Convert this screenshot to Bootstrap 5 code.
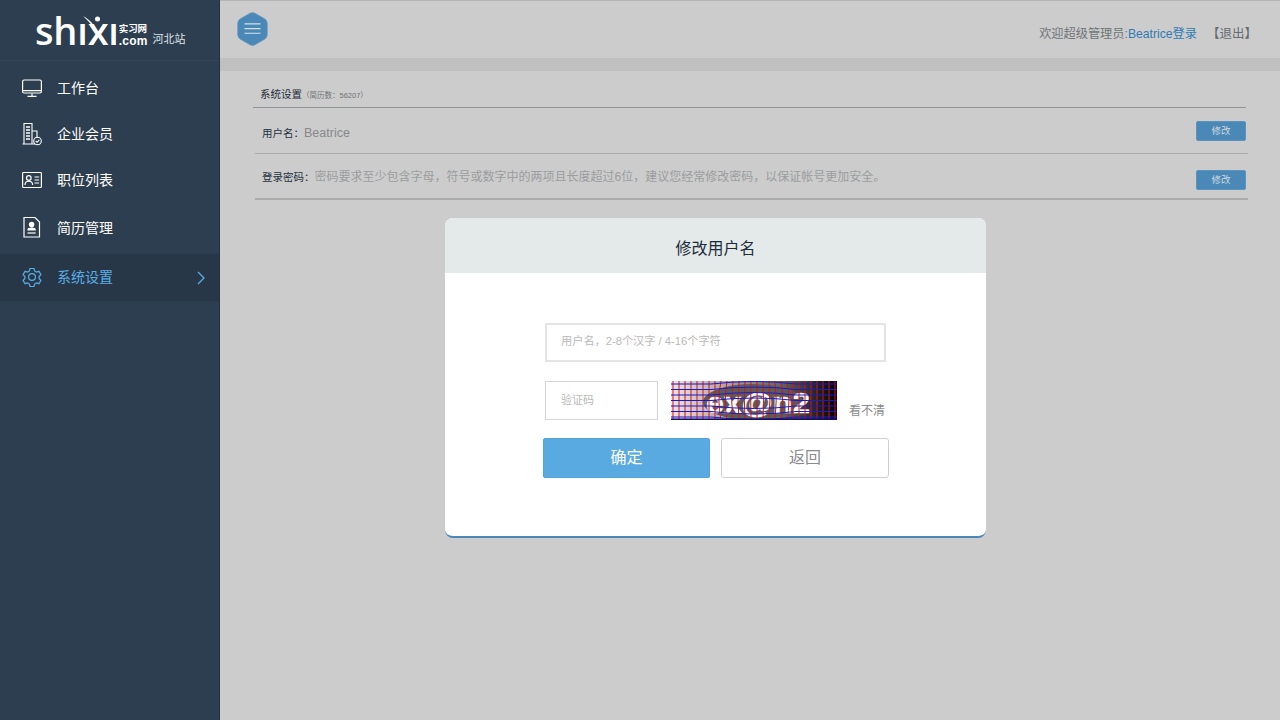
<!DOCTYPE html>
<html lang="zh-CN">
  <head>
    <meta charset="UTF-8" />
    <meta name="viewport" content="width=device-width, initial-scale=1" />
    <title>系统设置</title>
    <link href="https://cdn.jsdelivr.net/npm/bootstrap@5.3.0/dist/css/bootstrap.min.css" rel="stylesheet" />
    <style>
      html, body { height: 100%; }
      body {
        font-family: "Liberation Sans", "Noto Sans CJK SC", sans-serif;
        background: #cccccc;
        overflow: hidden;
      }
      .app-shell { height: 720px; }
      /* sidebar */
      .side-bar { width: 220px; background: #2d3e50; border-right: 1px solid #22303e; }
      .logo-box { position: relative; height: 61px; border-bottom: 1px solid #34475a; padding: 14px 0 0 35px; color: #fff; }
      .logo-main { font-size: 38px; line-height: 32px; font-weight: 600; letter-spacing: -.2px; font-family: "Open Sans", sans-serif; }
      .logo-swoosh { position: absolute; left: 82px; top: 15px; width: 20px; height: 13px; }
      .logo-side { line-height: 1; margin: 0 5px 0 0; }
      .logo-cn { font-size: 9.500px; font-weight: 700; line-height: 10px; margin-top: 10px; letter-spacing: -.1px; }
      .logo-com { font-size: 12px; font-weight: 700; line-height: 12px; margin-top: 1px; letter-spacing: .2px; }
      .logo-city { font-size: 11px; margin-top: 18px; line-height: 14px; color: #dfe4e8; }
      .side-list { margin-top: 4px; }
      .side-item { height: 46px; padding-left: 22px; color: #fff; font-size: 14px; text-decoration: none; }
      .side-item:hover { color: #fff; }
      .side-item svg.nav-ico { width: 20px; height: 24px; flex: none; margin-right: 15px; }
      .item-tall { height: 50px; }
      .item-active { height: 48px; margin-top: 1px; background: #273747; color: #5aaee6; border-bottom: 1px solid #2a3b4c; }
      .item-active:hover { color: #5aaee6; }
      .side-arrow { margin-left: auto; margin-right: 14px; width: 8px; height: 14px; }
      /* main */
      .main-pane { position: relative; background: #cccccc; border-top: 1px solid #b5b5b5; }
      .top-strip { height: 57px; padding: 11px 23px 0 17px; }
      .hex-btn { width: 31px; height: 34px; }
      .user-box { font-size: 12.200px; color: #6e7478; padding-top: 13px; }
      .user-name { color: #2f7bb4; text-decoration: none; }
      .logout-link { color: #666b6e; text-decoration: none; margin-left: 10px; font-size: 12.500px; }
      .gray-strip { height: 13px; background: #c0c0c0; }
      .set-title { margin: 0 34px 0 33px; height: 37px; padding: 14px 0 0 7px; border-bottom: 1px solid #8f9394; font-size: 10.500px; color: #1f2c38; line-height: 18px; }
      .set-title small { font-size: 7.500px; color: #6f7375; }
      .set-row { margin: 0 32px 0 35px; border-bottom: 1px solid #a9abac; font-size: 10.500px; color: #1f3040; padding-left: 7px; }
      .row-name { height: 46px; }
      .row-pass { height: 46px; border-bottom-width: 2px; }
      .row-value { font-size: 12.500px; color: #85898b; }
      .row-hint { font-size: 12px; color: #9b9d9e; }
      .text-nudge { padding-top: 2px; }
      .text-nudge-more { padding-top: 6px; }
      .edit-btn { width: 50px; height: 20px; padding: 0; font-size: 9.500px; line-height: 18px; color: #cfd8de; background: #4a88b8; border: 1px solid #5c93bd; border-radius: 2px; margin-right: 2px; }
      /* dialog */
      .name-dialog { position: absolute; left: 225px; top: 217px; width: 541px; height: 320px; background: #fff; border-radius: 8px; border-bottom: 2px solid #4a88b8; overflow: hidden; }
      .dialog-head { height: 55px; padding-top: 6px; background: #e4e9e9; color: #1d2c3a; font-size: 16px; }
      .dialog-body { padding: 50px 0 0 100px; }
      .name-input, .code-input { display: block; border-radius: 0; font-size: 11px; color: #333; padding: 0 15px; }
      .name-input { width: 341px; height: 39px; border: 2px solid #e4e4e4; border-radius: 1px; padding: 0 14px 3px; font-size: 11.200px; }
      .code-input { width: 113px; height: 39px; border: 1px solid #d4d4d4; padding-bottom: 2px; }
      .name-input::placeholder, .code-input::placeholder { color: #b9b9b9; }
      .code-row { margin-top: 19px; }
      .code-img { width: 166px; height: 39px; margin-left: 13px; flex: none; display: block; }
      .refresh-link { font-size: 12px; color: #8a8a8a; text-decoration: none; margin: 0 0 0 12px; line-height: 15px; padding-bottom: 1px; }
      .btn-row { margin: 18px 0 0 -2px; gap: 11px; }
      .ok-btn, .back-btn { height: 40px; padding: 0; font-size: 16px; border-radius: 2px; }
      .ok-btn { width: 167px; background: #5aaae2; border: 1px solid #54a3da; color: #fff; }
      .back-btn { width: 168px; background: #fff; border: 1px solid #cfcfcf; border-radius: 3px; color: #8b8b8b; }
    </style>
  </head>
  <body>
    <div class="app-shell d-flex">
      <!-- Sidebar -->
      <aside class="side-bar flex-shrink-0">
        <div class="logo-box d-flex">
          <div class="logo-main">shıxı</div>
          <svg class="logo-swoosh" viewBox="0 0 20 13"><path d="M1 1c3 3 6 5 10 11l1-1C9 6 5 3 1 1z" fill="#fff"/><circle cx="15.500" cy="4" r="2.500" fill="#fff"/></svg>
          <div class="logo-side">
            <div class="logo-cn">实习网</div>
            <div class="logo-com">.com</div>
          </div>
          <div class="logo-city">河北站</div>
        </div>
        <nav class="side-list d-flex flex-column">
          <a class="side-item d-flex align-items-center" href="#">
            <svg class="nav-ico" viewBox="0 0 20 24" fill="none" stroke="#fff" stroke-width="1.2"><rect x=".6" y="4" width="18.8" height="13" rx="1.5"/><path d="M.6 14.6h18.8M10 17.5v2.5M5.5 20.4h9"/></svg>
            工作台
          </a>
          <a class="side-item d-flex align-items-center" href="#">
            <svg class="nav-ico" viewBox="0 0 20 24" fill="none" stroke="#fff" stroke-width="1.1"><path d="M2 22V1.500h8V22M.5 22h12.500M10 9h5v7"/><path d="M4 5h4M4 8h4M4 11h4M4 14h4M4 17h4" stroke-width="1.400"/><circle cx="15.500" cy="19" r="3.800"/><path d="M13.700 19l1.400 1.300 2.200-2.400"/></svg>
            企业会员
          </a>
          <a class="side-item d-flex align-items-center" href="#">
            <svg class="nav-ico" viewBox="0 0 20 24" fill="none" stroke="#fff" stroke-width="1.2"><rect x=".6" y="4.500" width="18.800" height="15" rx=".8"/><circle cx="6.800" cy="10" r="2.300"/><path d="M3 17c0-5 7.600-5 7.600 0M12.500 9h4.600M12.500 12h4.600M12.500 15h4.600"/></svg>
            职位列表
          </a>
          <a class="side-item item-tall d-flex align-items-center" href="#">
            <svg class="nav-ico" viewBox="0 0 20 24" fill="none" stroke="#fff" stroke-width="1.2"><path d="M2 1.500h11l4.500 4.500v15H2z"/><circle cx="9.600" cy="8.600" r="2.200" fill="#fff"/><path d="M6 13.500c0-2 7.200-2 7.200 0v.5H6z" fill="#fff"/><path d="M5.500 17h8.200"/></svg>
            简历管理
          </a>
          <a class="side-item item-active d-flex align-items-center" href="#">
            <svg class="nav-ico" viewBox="0 0 20 24" fill="none" stroke="#5aaee6" stroke-width="1.2"><path d="M8 2.500h4l.6 2.400 1.900 1.100 2.400-.7 2 3.400-1.800 1.800v2l1.800 1.800-2 3.400-2.400-.7-1.900 1.100-.6 2.400H8l-.6-2.400-1.900-1.100-2.400.7-2-3.400 1.800-1.800v-2L1.100 8.700l2-3.400 2.400.7 1.900-1.100z"/><circle cx="10" cy="11" r="3.400"/></svg>
            系统设置
            <svg class="side-arrow" viewBox="0 0 8 14" fill="none" stroke="#5aaee6" stroke-width="1.3"><path d="M1 1l6 6-6 6"/></svg>
          </a>
        </nav>
      </aside>

      <!-- Main -->
      <main class="main-pane flex-grow-1">
        <div class="top-strip d-flex justify-content-between align-items-start">
          <svg class="hex-btn" viewBox="0 0 32 36"><path d="M13.500 1.400a5 5 0 0 1 5 0l10.500 6a5 5 0 0 1 2.500 4.300v12.600a5 5 0 0 1-2.500 4.300l-10.500 6a5 5 0 0 1-5 0L3 28.600a5 5 0 0 1-2.500-4.300V11.700A5 5 0 0 1 3 7.400z" fill="#4a88b8" stroke="#5c93bd"/><path d="M7.500 12.500h17M7.500 17.500h17M7.500 22.500h17" stroke="#d5dfe6" stroke-width="1.300"/></svg>
          <div class="user-box">欢迎超级管理员:<a class="user-name" href="#">Beatrice登录</a><a class="logout-link" href="#">【退出】</a></div>
        </div>
        <div class="gray-strip"></div>

        <div class="set-title">系统设置<small>（简历数：56207）</small></div>
        <div class="set-row row-name d-flex justify-content-between align-items-center">
          <div class="text-nudge-more">用户名：<span class="row-value">Beatrice</span></div>
          <button class="btn edit-btn" type="button">修改</button>
        </div>
        <div class="set-row row-pass d-flex justify-content-between align-items-center">
          <div class="text-nudge">登录密码：<span class="row-hint">密码要求至少包含字母，符号或数字中的两项且长度超过6位，建议您经常修改密码，以保证帐号更加安全。</span></div>
          <button class="btn edit-btn mt-2" type="button">修改</button>
        </div>

        <!-- Dialog -->
        <div class="name-dialog">
          <div class="dialog-head d-flex align-items-center justify-content-center">修改用户名</div>
          <div class="dialog-body">
            <input class="form-control name-input" type="text" placeholder="用户名，2-8个汉字 / 4-16个字符" />
            <div class="code-row d-flex align-items-end">
              <input class="form-control code-input" type="text" placeholder="验证码" />
              <svg class="code-img" id="captcha" viewBox="0 0 166 39"></svg>
              <a class="refresh-link" href="#">看不清</a>
            </div>
            <div class="btn-row d-flex">
              <button class="btn ok-btn" type="button">确定</button>
              <button class="btn back-btn" type="button">返回</button>
            </div>
          </div>
        </div>
      </main>
    </div>

    <script>
      // captcha noise: gradient backdrop, wavy grid and the code itself
      var ns = "http://www.w3.org/2000/svg";
      var svg = document.getElementById("captcha");
      function add(tag, attrs, text) {
        var el = document.createElementNS(ns, tag);
        for (var k in attrs) el.setAttribute(k, attrs[k]);
        if (text) el.textContent = text;
        svg.appendChild(el);
      }
      var defs = document.createElementNS(ns, "defs");
      defs.innerHTML = '<linearGradient id="cg"><stop offset="0" stop-color="#f0e4e4"/><stop offset=".3" stop-color="#b8a8a8"/><stop offset=".65" stop-color="#666"/><stop offset="1" stop-color="#000"/></linearGradient>';
      svg.appendChild(defs);
      add("rect", { width: 166, height: 39, fill: "url(#cg)" });
      add("ellipse", { cx: 82, cy: 21, rx: 50, ry: 18, fill: "#5c5c5c" });
      add("text", { x: 35, y: 32, fill: "#fff", stroke: "#fff", "stroke-width": .5, "font-family": "Liberation Sans", "font-size": 30, "font-weight": 700, textLength: 104, lengthAdjust: "spacingAndGlyphs" }, "ex@n2");
      for (var x = 2; x < 166; x += 6) {
        var bend = Math.abs(x - 84) < 36 ? (x - 84) * 0.12 : 0;
        add("path", { d: "M" + x + " 0Q" + (x + bend) + " 20 " + x + " 39", stroke: "#e01010", "stroke-width": 1, fill: "none" });
      }
      for (var y = 3; y < 39; y += 5.500) {
        var lift = (y < 20 ? -1 : 1) * 5;
        add("path", { d: "M0 " + y + "H40Q84 " + (y + lift) + " 125 " + y + "H166", stroke: "#1a1ad0", "stroke-width": 1, fill: "none" });
      }
      add("rect", { y: 37.500, width: 166, height: 1.500, fill: "#10106a" });
    </script>
    <script src="https://cdn.jsdelivr.net/npm/bootstrap@5.3.0/dist/js/bootstrap.bundle.min.js"></script>
  </body>
</html>
